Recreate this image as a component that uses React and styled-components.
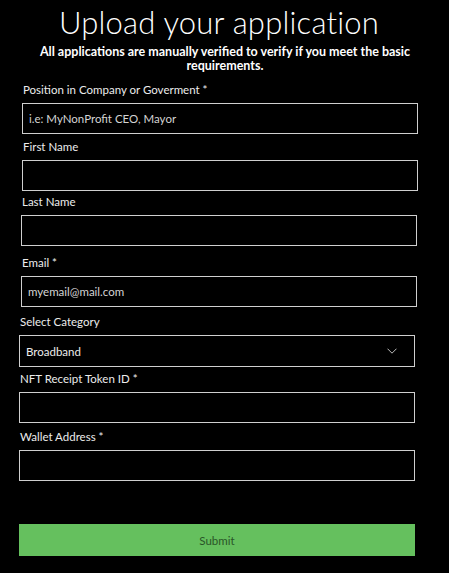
import React from 'react';
import styled, { createGlobalStyle } from 'styled-components';

const GlobalStyle = createGlobalStyle`
  html, body {
    margin: 0;
    padding: 0;
    background: #000;
  }
  * {
    box-sizing: border-box;
  }
`;

const Page = styled.div`
  width: 449px;
  min-height: 573px;
  background: #000;
  color: #fff;
  padding: 4px 0 0 0;
`;

const Title = styled.h1`
  margin: 0;
  width: 438px;
  text-align: center;
  font-family: "Lato", "Liberation Sans", sans-serif;
  font-weight: 300;
  font-size: 31px;
  line-height: 36px;
  letter-spacing: 0.2px;
`;

const Subtitle = styled.p`
  margin: 5px 0 0 0;
  width: 450px;
  text-align: center;
  font-family: "Lato", "Liberation Sans", sans-serif;
  font-weight: 700;
  font-size: 12.5px;
  line-height: 14px;
`;

const Form = styled.form`
  display: flex;
  flex-direction: column;
  margin-top: 9px;
`;

const Field = styled.div`
  display: flex;
  flex-direction: column;
  margin-top: ${p => p.$top}px;
  margin-left: ${p => p.$indent}px;
  width: 396px;
`;

const Label = styled.label`
  font-family: "Lato", "Liberation Sans", sans-serif;
  font-size: 11.5px;
  line-height: 16px;
  color: #ececec;
  margin-bottom: 5px;
  padding-left: 1px;
`;

const Input = styled.input`
  width: 100%;
  height: 31px;
  background: #000;
  border: 1px solid #cfcfcf;
  border-radius: 0;
  padding: 0 6px;
  font-family: "Lato", "Liberation Sans", sans-serif;
  font-size: 11.5px;
  color: #fff;
  outline: none;

  &::placeholder {
    color: #d4d4d4;
  }
`;

const SelectBox = styled.div`
  display: flex;
  align-items: center;
  justify-content: space-between;
  width: 100%;
  height: 32px;
  border: 1px solid #cfcfcf;
  padding: 0 17px 0 6px;
  font-family: "Lato", "Liberation Sans", sans-serif;
  font-size: 11.5px;
  color: #ececec;
`;

const SubmitButton = styled.button`
  margin: 43px 0 0 19px;
  width: 396px;
  height: 32px;
  border: none;
  border-radius: 0;
  background: #65c05e;
  color: #2a5528;
  font-family: "Lato", "Liberation Sans", sans-serif;
  font-size: 11.5px;
  cursor: pointer;
`;

const Chevron = () => (
  <svg width="10" height="6" viewBox="0 0 10 6" fill="none">
    <polyline points="0.5,0.7 5,5.2 9.5,0.7" stroke="#bdbdbd" strokeWidth="1" />
  </svg>
);

const fields = [
  { label: 'Position in Company or Goverment *', placeholder: 'i.e: MyNonProfit CEO, Mayor', top: 0, indent: 22 },
  { label: 'First Name', placeholder: '', top: 5, indent: 22 },
  { label: 'Last Name', placeholder: '', top: 3, indent: 21 },
  { label: 'Email *', placeholder: 'myemail@mail.com', top: 9, indent: 21 },
];

const fieldsAfter = [
  { label: 'NFT Receipt Token ID *', placeholder: '', top: 4, indent: 19 },
  { label: 'Wallet Address *', placeholder: '', top: 6, indent: 19 },
];

const App = () => {
  return (
    <Page>
      <GlobalStyle />
      <Title>Upload your application</Title>
      <Subtitle>
        All applications are manually verified to verify if you meet the basic
        <br />
        requirements.
      </Subtitle>
      <Form onSubmit={e => e.preventDefault()}>
        {fields.map((f, idx) => (
          <Field key={idx} $top={f.top} $indent={f.indent}>
            <Label>{f.label}</Label>
            <Input placeholder={f.placeholder} />
          </Field>
        ))}

        <Field $top={7} $indent={19}>
          <Label>Select Category</Label>
          <SelectBox>
            <span>Broadband</span>
            <Chevron />
          </SelectBox>
        </Field>

        {fieldsAfter.map((f, idx) => (
          <Field key={idx} $top={f.top} $indent={f.indent}>
            <Label>{f.label}</Label>
            <Input placeholder={f.placeholder} />
          </Field>
        ))}

        <SubmitButton type="submit">Submit</SubmitButton>
      </Form>
    </Page>
  );
};

export default App;
